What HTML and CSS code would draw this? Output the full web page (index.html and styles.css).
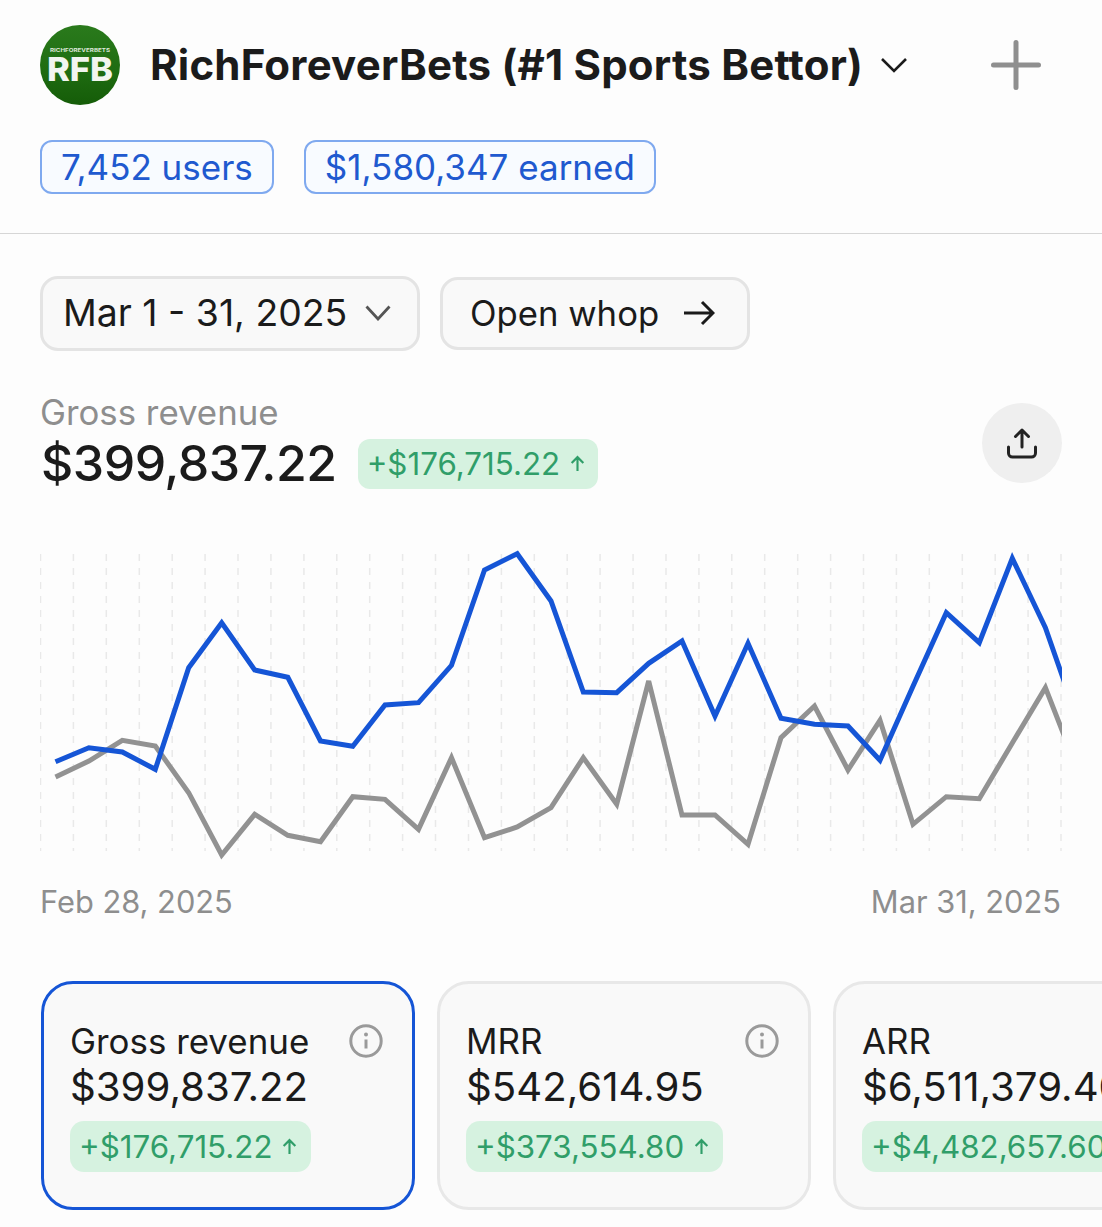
FILE: index.html
```html
<!DOCTYPE html>
<html lang="en">
<head>
<meta charset="utf-8">
<title>RichForeverBets</title>
<link rel="stylesheet" href="styles.css">
</head>
<body>
<header class="top">
  <div class="brand-row">
    <svg class="logo" viewBox="0 0 80 80" width="80" height="80">
      <defs>
        <linearGradient id="lg" x1="0" y1="0" x2="0" y2="1">
          <stop offset="0" stop-color="#2a7a1c"/>
          <stop offset="0.55" stop-color="#1f6d12"/>
          <stop offset="1" stop-color="#155c08"/>
        </linearGradient>
      </defs>
      <circle cx="40" cy="40" r="40" fill="url(#lg)"/>
      <text class="logo-small" x="40" y="27" text-anchor="middle" textLength="60" lengthAdjust="spacingAndGlyphs">RICHFOREVERBETS</text>
      <text class="logo-big" x="40" y="56" text-anchor="middle" textLength="66" lengthAdjust="spacingAndGlyphs">RFB</text>
    </svg>
    <h1 class="title">RichForeverBets (#1 Sports Bettor)</h1>
    <svg class="title-chevron" viewBox="0 0 28 16" width="28" height="16"><path d="M2 2l12 12L26 2"/></svg>
    <svg class="plus" viewBox="0 0 50 50" width="50" height="50"><path d="M25 2.500v45M2.500 25h45"/></svg>
  </div>
  <div class="chips">
    <span class="chip chip-users">7,452 users</span>
    <span class="chip chip-earned">$1,580,347 earned</span>
  </div>
</header>

<main class="content">
  <div class="controls">
    <button class="btn btn-date">Mar 1 - 31, 2025
      <svg class="btn-chevron" viewBox="0 0 26 16" width="26" height="16"><path d="M1.500 1.500L13 14 24.500 1.500"/></svg>
    </button>
    <button class="btn btn-open">Open whop
      <svg class="btn-arrow" viewBox="0 0 32 26" width="32" height="26"><path d="M1 13h29M19 2l11 11-11 11"/></svg>
    </button>
  </div>

  <section class="metric">
    <div class="metric-text">
      <div class="metric-label">Gross revenue</div>
      <div class="metric-line">
        <span class="metric-value">$399,837.22</span>
        <span class="delta delta-lg">+$176,715.22
          <svg class="delta-arrow" viewBox="0 0 14 16" width="15" height="17"><path d="M7 15V2M1.500 7.500L7 2l5.500 5.500"/></svg>
        </span>
      </div>
    </div>
    <div class="share">
      <svg viewBox="0 0 32 32" width="32" height="32"><path d="M16 20V3M9.500 9.500L16 3l6.500 6.500M2.500 20v6a4 4 0 0 0 4 4h19a4 4 0 0 0 4-4v-6"/></svg>
    </div>
  </section>

  <svg class="chart" viewBox="40 545 1022 315" width="1022" height="315">
    <path class="grid" d="M40.500 553V850M73.400 553V850M106.300 553V850M139.300 553V850M172.200 553V850M205.100 553V850M238 553V850M270.900 553V850M303.900 553V850M336.800 553V850M369.700 553V850M402.600 553V850M435.500 553V850M468.500 553V850M501.400 553V850M534.300 553V850M567.200 553V850M600.100 553V850M633.100 553V850M666 553V850M698.900 553V850M731.800 553V850M764.700 553V850M797.700 553V850M830.600 553V850M863.500 553V850M896.400 553V850M929.300 553V850M962.300 553V850M995.200 553V850M1028.100 553V850M1061 553V850"/>
    <polyline class="line line-gray" points="55.500,776 88.900,760 122.300,739.300 155.300,745 188.700,791.700 221.700,854 254.700,813.300 287.800,834.300 320.500,840.700 352.800,795.700 385,798.300 418.500,828.300 451.500,756.700 484.500,836.700 517.200,826 551,806.700 583.300,756.700 616.700,803.300 648.700,680 682,814 715,814 748,843.300 781,736.700 814.500,705 848,769 880,719.300 913,823.300 946.300,795.700 979.300,797.700 1012.300,742 1045.400,686.700 1078,770"/>
    <polyline class="line line-blue" points="55.500,760.700 88.900,746.700 122.300,751 155.300,768.300 188.700,666.700 221.700,621.700 254.700,669 287.800,676.300 320.500,740 352.800,745.300 385,704 418.500,701.700 451.500,664.300 484.500,569 517.200,552.700 551,600 583.300,691 616.700,691.700 648.700,662.300 682,640 715,715 748,642.300 781,717.300 814.500,723.300 848,725 880,759.300 913,685.300 946.300,611.700 979.300,641.700 1012.300,557.300 1045.400,626.700 1078,720"/>
  </svg>

  <div class="dates">
    <span>Feb 28, 2025</span>
    <span>Mar 31, 2025</span>
  </div>

  <div class="cards">
    <article class="card card-active">
      <div class="card-head">
        <span class="card-label">Gross revenue</span>
        <svg class="info" viewBox="0 0 34 34" width="34" height="34"><circle cx="17" cy="17" r="15.200"/><path d="M17 15.500v9"/><circle class="info-dot" cx="17" cy="10.500" r="2"/></svg>
      </div>
      <div class="card-value">$399,837.22</div>
      <span class="delta delta-card">+$176,715.22
        <svg class="delta-arrow" viewBox="0 0 14 16" width="15" height="17"><path d="M7 15V2M1.500 7.500L7 2l5.500 5.500"/></svg>
      </span>
    </article>
    <article class="card">
      <div class="card-head">
        <span class="card-label">MRR</span>
        <svg class="info" viewBox="0 0 34 34" width="34" height="34"><circle cx="17" cy="17" r="15.200"/><path d="M17 15.500v9"/><circle class="info-dot" cx="17" cy="10.500" r="2"/></svg>
      </div>
      <div class="card-value">$542,614.95</div>
      <span class="delta delta-card">+$373,554.80
        <svg class="delta-arrow" viewBox="0 0 14 16" width="15" height="17"><path d="M7 15V2M1.500 7.500L7 2l5.500 5.500"/></svg>
      </span>
    </article>
    <article class="card">
      <div class="card-head">
        <span class="card-label">ARR</span>
      </div>
      <div class="card-value">$6,511,379.40</div>
      <span class="delta delta-card">+$4,482,657.60
        <svg class="delta-arrow" viewBox="0 0 14 16" width="15" height="17"><path d="M7 15V2M1.500 7.500L7 2l5.500 5.500"/></svg>
      </span>
    </article>
  </div>
</main>
</body>
</html>
```
FILE: styles.css
```css
* { box-sizing: border-box; }
html, body { margin: 0; height: 100%; overflow: hidden; }
body {
  background: #fdfdfd;
  color: #1b1b1b;
  font-family: Inter, "Liberation Sans", sans-serif;
}

.top {
  padding: 25px 40px 39px;
  border-bottom: 1px solid #d6d6d6;
}
.brand-row { display: flex; align-items: center; height: 80px; }
.logo { flex: none; }
.logo-small { font: 700 5px Inter, sans-serif; fill: #dfe8dc; }
.logo-big { font: 800 33px Inter, sans-serif; fill: #f2f5f0; }
.title {
  margin: 0 0 0 30px;
  font-size: 42px;
  line-height: 80px;
  font-weight: 700;
  letter-spacing: 0.220px;
  white-space: nowrap;
}
.title-chevron { margin-left: 17px; flex: none; fill: none; stroke: #1b1b1b; stroke-width: 2.600; }
.plus { margin-left: auto; margin-right: 21px; flex: none; fill: none; stroke: #8f8f8f; stroke-width: 5; stroke-linecap: round; }

.chips { display: flex; gap: 30px; margin-top: 35px; }
.chip {
  height: 54px;
  display: flex;
  align-items: center;
  padding: 0 19px;
  border: 2px solid #7fa9ef;
  border-radius: 12px;
  background: #f8fbff;
  color: #2059cf;
  font-size: 35px;
  white-space: nowrap;
}

.content { padding: 42px 40px 0; }
.controls { display: flex; align-items: center; gap: 20px; }
.btn {
  display: flex;
  align-items: center;
  justify-content: space-between;
  background: #f9f9f9;
  border: 3px solid #e4e4e4;
  border-radius: 18px;
  color: #1b1b1b;
  font-family: Inter, sans-serif;
  font-weight: 400;
}
.btn-date { width: 380px; height: 75px; padding: 0 26px 2px 20px; font-size: 37.400px; }
.btn-open { width: 310px; height: 73px; padding: 0 32px 2px 27px; font-size: 34.700px; }
.btn-chevron { fill: none; stroke: #555; stroke-width: 2.800; }
.btn-arrow { fill: none; stroke: #1b1b1b; stroke-width: 3; }

.metric { display: flex; justify-content: space-between; align-items: flex-start; margin-top: 41px; }
.metric-label { color: #8e8e8e; font-size: 34.800px; line-height: 40px; }
.metric-line { display: flex; align-items: center; gap: 21px; margin-top: 1px; height: 60px; padding-left: 1px; }
.metric-value { font-size: 50px; font-weight: 500; letter-spacing: -0.500px; white-space: nowrap; }
.share {
  width: 80px;
  height: 80px;
  margin-top: 11px;
  border-radius: 50%;
  background: #efefef;
  display: flex;
  align-items: center;
  justify-content: center;
}
.share svg { fill: none; stroke: #222; stroke-width: 3; stroke-linecap: round; stroke-linejoin: round; }

.delta {
  display: inline-flex;
  align-items: center;
  gap: 10px;
  height: 51px;
  background: #d6f2e0;
  color: #309e69;
  white-space: nowrap;
}
.delta-lg { padding: 0 13px 0 9px; border-radius: 12px; font-size: 31.300px; height: 50px; margin-top: 1px; }
.delta-card { padding: 0 14px 0 9px; border-radius: 14px; font-size: 31.300px; }
.delta-arrow { fill: none; stroke: #309e69; stroke-width: 2; flex: none; }

.chart { display: block; margin-top: 53px; overflow: hidden; }
.grid { fill: none; stroke: #e9e9e9; stroke-width: 1.500; stroke-dasharray: 7 7; }
.line { fill: none; stroke-width: 5; stroke-linejoin: miter; }
.line-gray { stroke: #929292; }
.line-blue { stroke: #1555d6; }

.dates {
  display: flex;
  justify-content: space-between;
  margin-top: 23px;
  padding: 0 1px 0 0;
  color: #8e8e8e;
  font-size: 30.800px;
  line-height: 36px;
}

.cards { display: flex; gap: 22px; margin: 61px 0 0 1px; width: max-content; }
.card {
  width: 374px;
  height: 229px;
  padding: 39px 29px 0 26px;
  border: 3px solid #e8e8e8;
  border-radius: 32px;
  background: #f9f9f9;
}
.card-active { border-color: #1555d6; }
.card-head { display: flex; justify-content: space-between; align-items: center; height: 36px; }
.card-label { font-size: 34.900px; line-height: 36px; }
.card-value { margin-top: 7px; font-size: 40.200px; line-height: 42px; white-space: nowrap; }
.card .delta { margin-top: 13px; }
.info { fill: none; stroke: #9a9a9a; stroke-width: 3; }
.info-dot { fill: #9a9a9a; stroke: none; }
```
